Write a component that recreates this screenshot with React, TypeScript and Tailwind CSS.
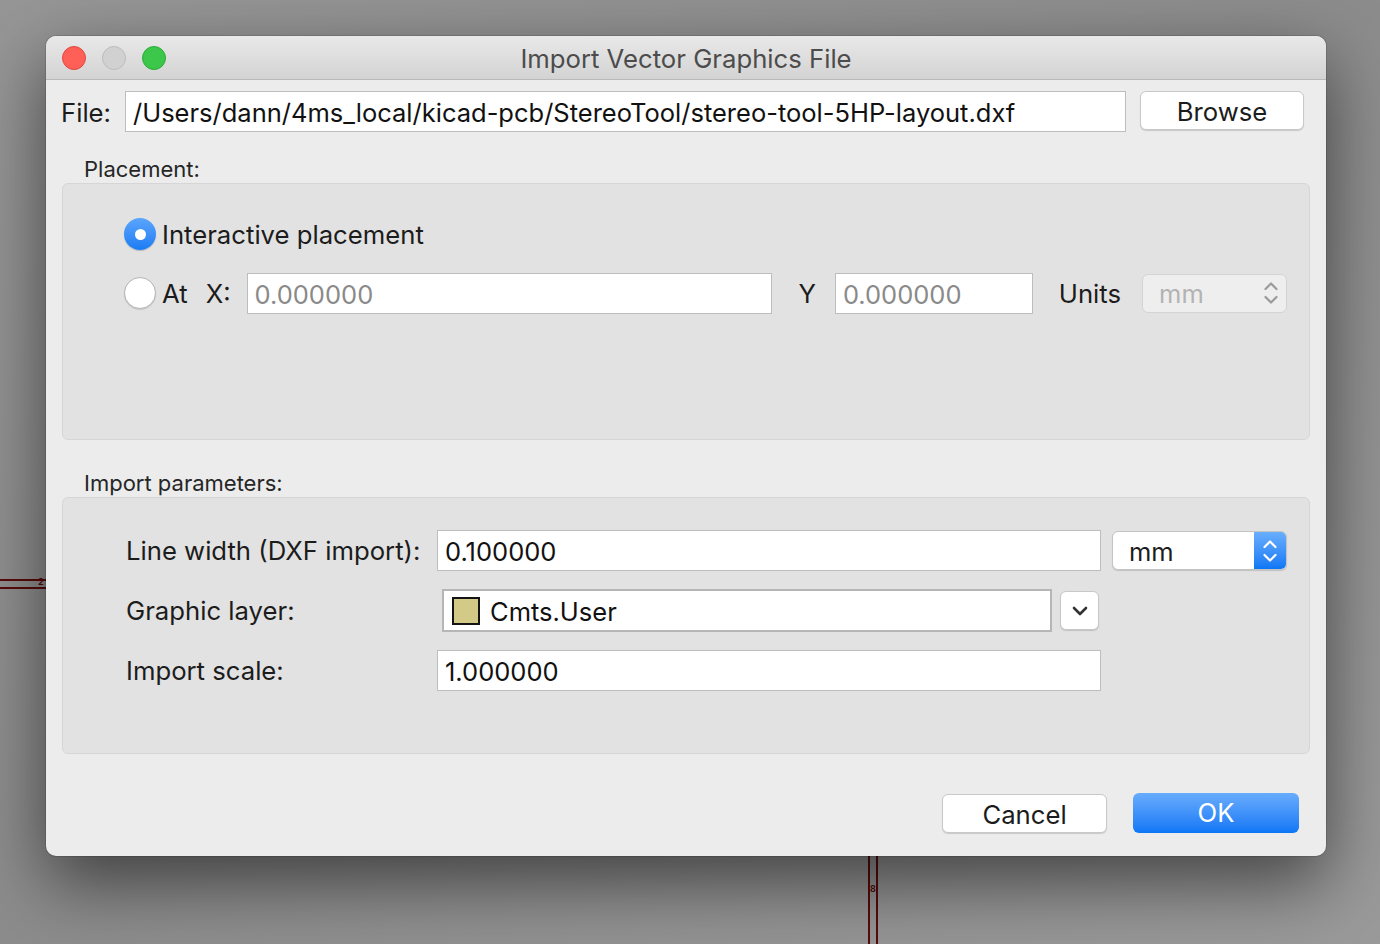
import React from "react";

const font = { fontFamily: "Inter, 'Noto Sans', sans-serif" };

const Chevrons = ({ color }: { color: string }) => (
  <svg width="16" height="26" viewBox="0 0 16 26" fill="none" stroke={color} strokeWidth="2.2" strokeLinecap="round" strokeLinejoin="round">
    <path d="M2.5 9 L8 3.5 L13.5 9" />
    <path d="M2.5 17 L8 22.5 L13.5 17" />
  </svg>
);

const Radio = ({ checked }: { checked?: boolean }) =>
  checked ? (
    <div className="w-8 h-8 rounded-full bg-gradient-to-b from-[#5aa5fd] to-[#1a7cf3] flex items-center justify-center shadow-[0_1px_1px_rgba(0,0,0,0.2)]">
      <div className="w-[11px] h-[11px] rounded-full bg-white" />
    </div>
  ) : (
    <div className="w-8 h-8 rounded-full bg-white border border-[#b4b4b4] shadow-[0_1px_1px_rgba(0,0,0,0.12)]" />
  );

const TextBox = ({ value, muted, className }: { value: string; muted?: boolean; className: string }) => (
  <div className={`h-[41px] bg-white border border-[#bdbdbd] flex items-center px-[7px] pt-[4px] text-[25.5px] ${muted ? "text-[#8a8a8a]" : "text-[#111]"} ${className}`}>
    {value}
  </div>
);

export default function App() {
  return (
    <div className="relative w-[1380px] h-[944px] overflow-hidden bg-gradient-to-br from-[#969696] via-[#8c8c8c] to-[#9a9a9a]" style={font}>
      {/* pcb traces behind the dialog */}
      <div className="absolute left-0 top-[579px] w-[46px] h-[2px] bg-[#5a0a0a]" />
      <div className="absolute left-0 top-[587px] w-[46px] h-[2px] bg-[#5a0a0a]" />
      <div className="absolute left-[38px] top-[577px] text-[9px] leading-none font-bold text-[#5a0a0a]">2</div>
      <div className="absolute left-[868px] top-[856px] w-[2px] h-[88px] bg-[#5a0a0a]" />
      <div className="absolute left-[876px] top-[856px] w-[2px] h-[88px] bg-[#5a0a0a]" />
      <div className="absolute left-[870px] top-[884px] text-[9px] leading-none font-bold text-[#5a0a0a]">8</div>

      <div className="pt-[36px] pl-[46px]">
        <div className="relative w-[1280px] h-[820px] rounded-[10px] bg-[#ececec] shadow-[0_26px_70px_rgba(0,0,0,0.55),0_0_0_1px_rgba(0,0,0,0.12)] flex flex-col">
          {/* title bar */}
          <div className="h-[44px] shrink-0 rounded-t-[10px] bg-gradient-to-b from-[#e9e9e9] to-[#d3d3d3] border-b border-[#b9b9b9] flex items-center relative">
            <div className="flex items-center gap-[16px] pl-[16px]">
              <div className="w-6 h-6 rounded-full bg-[#fe5f57] border border-[#e2463f]" />
              <div className="w-6 h-6 rounded-full bg-[#d1d1d1] border border-[#bdbdbd]" />
              <div className="w-6 h-6 rounded-full bg-[#3cc74b] border border-[#2aac37]" />
            </div>
            <div className="absolute inset-0 flex items-center justify-center pt-[4px] text-[25.7px] text-[#4c4c4c] pointer-events-none">
              Import Vector Graphics File
            </div>
          </div>

          {/* file row */}
          <div className="flex items-center h-[41px] mt-[11px] pl-[15px] pr-[22px]">
            <span className="text-[25.7px] leading-[32px] text-[#1c1c1c] w-[64px] pt-[3px]">File:</span>
            <TextBox value="/Users/dann/4ms_local/kicad-pcb/StereoTool/stereo-tool-5HP-layout.dxf" className="w-[1001px]" />
            <button className="ml-[14px] w-[164px] h-[39px] rounded-[6px] bg-white border border-[#c8c8c8] shadow-[0_1px_1px_rgba(0,0,0,0.15)] pt-[1px] text-[25.7px] text-[#1c1c1c] mb-[2px]">
              Browse
            </button>
          </div>

          {/* placement */}
          <div className="mt-[23px] pl-[38px] text-[22px] text-[#262626] leading-[28px]">Placement:</div>
          <div className="mx-[16px] h-[257px] rounded-[6px] bg-[#e2e2e2] border border-[#d6d6d6] pl-[61px] pt-[34px] pr-[22px]">
            <div className="flex items-center gap-[6px] h-[32px]">
              <Radio checked />
              <span className="text-[25.7px] text-[#1c1c1c] pt-[2px]">Interactive placement</span>
            </div>
            <div className="flex items-center mt-[22px] h-[42px]">
              <Radio />
              <span className="ml-[6px] text-[25.7px] text-[#1c1c1c] pt-[2px]">At</span>
              <span className="ml-[18px] text-[25.7px] text-[#1c1c1c] pt-[2px]">X:</span>
              <TextBox value="0.000000" muted className="ml-[16px] w-[526px]" />
              <span className="ml-[26px] text-[25.7px] text-[#1c1c1c] pt-[2px]">Y</span>
              <TextBox value="0.000000" muted className="ml-[19px] w-[198px]" />
              <span className="ml-[26px] text-[25.7px] text-[#1c1c1c] pt-[2px]">Units</span>
              <div className="ml-[21px] w-[145px] h-[39px] rounded-[6px] bg-[#eeeeee] border border-[#d4d4d4] flex items-center justify-between pl-[16px] pr-[7px] text-[25.5px] text-[#b3b3b3]">
                <span className="pt-[3px]">mm</span>
                <Chevrons color="#9a9a9a" />
              </div>
            </div>
          </div>

          {/* import parameters */}
          <div className="mt-[29px] pl-[38px] text-[22px] text-[#262626] leading-[28px]">Import parameters:</div>
          <div className="mx-[16px] h-[257px] rounded-[6px] bg-[#e2e2e2] border border-[#d6d6d6] pl-[63px] pt-[32px]">
            <div className="flex items-center h-[41px]">
              <span className="w-[311px] text-[25.7px] text-[#1c1c1c] pt-[2px]">Line width (DXF import):</span>
              <TextBox value="0.100000" className="w-[664px]" />
              <div className="ml-[11px] w-[175px] h-[39px] rounded-[6px] bg-white border border-[#c4c4c4] shadow-[0_1px_1px_rgba(0,0,0,0.15)] flex items-stretch overflow-hidden">
                <span className="flex-1 flex items-center pl-[16px] pt-[3px] text-[25.5px] text-[#1c1c1c]">mm</span>
                <span className="w-[32px] bg-gradient-to-b from-[#68aefd] to-[#0a77f5] flex items-center justify-center">
                  <Chevrons color="#ffffff" />
                </span>
              </div>
            </div>
            <div className="flex items-center h-[43px] mt-[18px]">
              <span className="w-[316px] text-[25.7px] text-[#1c1c1c] pt-[2px]">Graphic layer:</span>
              <div className="w-[610px] h-[43px] bg-white border-2 border-[#b6b6b6] flex items-center pl-[8px] gap-[10px] text-[25.5px] text-[#111]">
                <div className="w-[28px] h-[28px] bg-[#d4ca88] border-2 border-[#141414]" />
                <span className="pt-[3px]">Cmts.User</span>
              </div>
              <div className="ml-[8px] w-[39px] h-[39px] rounded-[6px] bg-white border border-[#c8c8c8] shadow-[0_1px_1px_rgba(0,0,0,0.15)] flex items-center justify-center">
                <svg width="16" height="10" viewBox="0 0 16 10" fill="none" stroke="#333" strokeWidth="2.6" strokeLinecap="round" strokeLinejoin="round">
                  <path d="M2 2 L8 8 L14 2" />
                </svg>
              </div>
            </div>
            <div className="flex items-center h-[41px] mt-[18px]">
              <span className="w-[311px] text-[25.7px] text-[#1c1c1c] pt-[2px]">Import scale:</span>
              <TextBox value="1.000000" className="w-[664px]" />
            </div>
          </div>

          {/* buttons */}
          <div className="flex justify-end items-center gap-[26px] mt-[39px] pr-[27px]">
            <button className="w-[165px] h-[39px] rounded-[6px] bg-white border border-[#c8c8c8] shadow-[0_1px_1px_rgba(0,0,0,0.15)] pt-[1px] text-[25.7px] text-[#1c1c1c]">
              Cancel
            </button>
            <button className="w-[166px] h-[40px] rounded-[6px] bg-gradient-to-b from-[#67acfc] to-[#0a76f6] pt-[1px] text-[25.7px] text-white">
              OK
            </button>
          </div>
        </div>
      </div>
    </div>
  );
}
